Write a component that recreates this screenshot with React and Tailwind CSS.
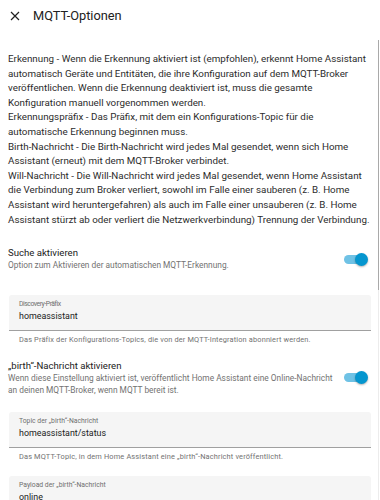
import React from "react";

function Toggle() {
  return (
    <div className="relative w-[24px] h-[13px] shrink-0">
      <div className="absolute left-0 top-[2px] w-[20px] h-[9px] rounded-full bg-[#6fc2e5]"></div>
      <div className="absolute right-0 top-0 w-[13px] h-[13px] rounded-full bg-[#0596cf] shadow-[0_1px_2px_rgba(0,0,0,0.3)]"></div>
    </div>
  );
}

function Field({ label, value, helper, labelClass = "" }) {
  return (
    <div>
      <div className="mx-[9px] h-[36px] bg-[#f5f5f5] rounded-t-[3px] border-b border-[#a0a0a0] px-[10px] pt-[5px]">
        <div className={"text-[6.8px] leading-[9px] text-[#6f6f6f] whitespace-nowrap " + labelClass}>{label}</div>
        <div className="mt-[1px] text-[8.9px] leading-[12px] text-[#212121] whitespace-nowrap">{value}</div>
      </div>
      {helper && (
        <div className="pl-[19px] pt-[4px] text-[7.4px] leading-[10px] text-[#727272] tracking-[0.15px] whitespace-nowrap">{helper}</div>
      )}
    </div>
  );
}

const bodyLines = [
  "Erkennung - Wenn die Erkennung aktiviert ist (empfohlen), erkennt Home Assistant",
  "automatisch Geräte und Entitäten, die ihre Konfiguration auf dem MQTT-Broker",
  "veröffentlichen. Wenn die Erkennung deaktiviert ist, muss die gesamte",
  "Konfiguration manuell vorgenommen werden.",
  "Erkennungspräfix - Das Präfix, mit dem ein Konfigurations-Topic für die",
  "automatische Erkennung beginnen muss.",
  "Birth-Nachricht - Die Birth-Nachricht wird jedes Mal gesendet, wenn sich Home",
  "Assistant (erneut) mit dem MQTT-Broker verbindet.",
  "Will-Nachricht - Die Will-Nachricht wird jedes Mal gesendet, wenn Home Assistant",
  "die Verbindung zum Broker verliert, sowohl im Falle einer sauberen (z. B. Home",
  "Assistant wird heruntergefahren) als auch im Falle einer unsauberen (z. B. Home",
  "Assistant stürzt ab oder verliert die Netzwerkverbindung) Trennung der Verbindung.",
];

export default function App() {
  return (
    <div className="relative w-[380px] h-[500px] overflow-hidden bg-white text-[#212121]" style={{ fontFamily: "Roboto, 'Noto Sans', sans-serif" }}>
      <div className="absolute right-[1px] top-[40px] w-[1px] h-[250px] bg-[#a9a9a9]"></div>
      <div className="absolute right-[1px] top-[290px] w-[1px] h-[210px] bg-[#ececec]"></div>
      <div className="flex items-center h-[32px] pl-[10px]">
        <svg width="10" height="10" viewBox="0 0 10 10" className="shrink-0">
          <path d="M1 1L9 9M9 1L1 9" stroke="#212121" strokeWidth="1.2" />
        </svg>
        <div className="ml-[13px] text-[12.8px] font-normal text-[#212121]">MQTT-Optionen</div>
      </div>
      <div className="pl-[8px] pt-[20px] text-[9.8px] leading-[14.6px] text-[#2c2c2c]">
        {bodyLines.map((l, i) => (
          <div key={i} className="whitespace-nowrap">{l}</div>
        ))}
      </div>
      <div className="flex items-center pl-[8px] pr-[12px] pt-[20px]">
        <div className="flex-1">
          <div className="text-[9.6px] leading-[12px] text-[#212121]">Suche aktivieren</div>
          <div className="text-[8.35px] leading-[12px] text-[#727272]">Option zum Aktivieren der automatischen MQTT-Erkennung.</div>
        </div>
        <Toggle />
      </div>
      <div className="pt-[24px]">
        <Field label="Discovery-Präfix" labelClass="tracking-[-0.45px]" value="homeassistant" helper="Das Präfix der Konfigurations-Topics, die von der MQTT-Integration abonniert werden." />
      </div>
      <div className="flex items-center pl-[8px] pr-[12px] pt-[14px]">
        <div className="flex-1">
          <div className="text-[9.6px] leading-[13px] text-[#212121]">„birth“-Nachricht aktivieren</div>
          <div className="text-[8.35px] leading-[12px] text-[#727272] whitespace-nowrap">Wenn diese Einstellung aktiviert ist, veröffentlicht Home Assistant eine Online-Nachricht</div>
          <div className="text-[8.35px] leading-[12px] text-[#727272] whitespace-nowrap">an deinen MQTT-Broker, wenn MQTT bereit ist.</div>
        </div>
        <Toggle />
      </div>
      <div className="pt-[16px]">
        <Field label="Topic der „birth“-Nachricht" value="homeassistant/status" helper="Das MQTT-Topic, in dem Home Assistant eine „birth“-Nachricht veröffentlicht." />
      </div>
      <div className="pt-[14px]">
        <Field label="Payload der „birth“-Nachricht" value="online" />
      </div>
    </div>
  );
}
